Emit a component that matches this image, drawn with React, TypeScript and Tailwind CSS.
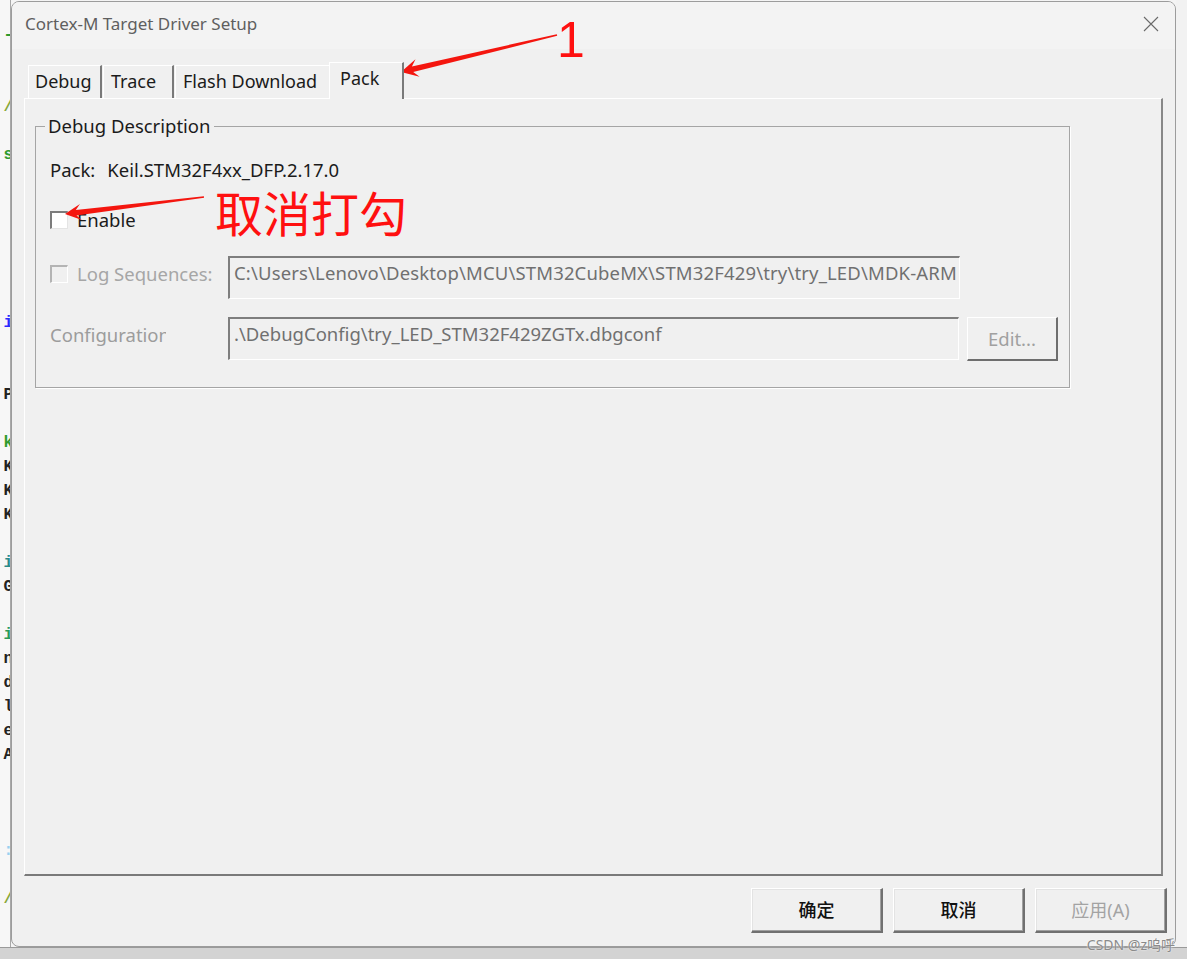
import React from 'react';

// code editor fragments peeking out at the left edge (line index -> glyph)
const codeLines: Record<number, { ch: string; color: string }> = {
  0: { ch: '-', color: 'text-[#2e9a2e]' },
  3: { ch: '/', color: 'text-[#8aa83a]' },
  5: { ch: 's', color: 'text-[#2e9a2e]' },
  12: { ch: 'i', color: 'text-[#2a2aff]' },
  15: { ch: 'P', color: 'text-[#222]' },
  17: { ch: 'k', color: 'text-[#2e9a2e]' },
  18: { ch: 'K', color: 'text-[#222]' },
  19: { ch: 'K', color: 'text-[#222]' },
  20: { ch: 'K', color: 'text-[#222]' },
  22: { ch: 'i', color: 'text-[#2a8a8a]' },
  23: { ch: 'G', color: 'text-[#222]' },
  25: { ch: 'i', color: 'text-[#2a9a5a]' },
  26: { ch: 'n', color: 'text-[#222]' },
  27: { ch: 'd', color: 'text-[#222]' },
  28: { ch: 'l', color: 'text-[#222]' },
  29: { ch: 'e', color: 'text-[#222]' },
  30: { ch: 'A', color: 'text-[#222]' },
  34: { ch: ':', color: 'text-[#9ad0f0]' },
  36: { ch: '/', color: 'text-[#8aa83a]' },
};

// tapered red annotation arrow: thin tail, wider neck, notched head
const arrow = (
  tx: number, ty: number, hx: number, hy: number,
  headLen: number, headHalf: number, tailW: number, neckW: number
) => {
  const dx = hx - tx;
  const dy = hy - ty;
  const len = Math.hypot(dx, dy);
  const ux = dx / len;
  const uy = dy / len;
  const nx = -uy;
  const ny = ux;
  const bx = hx - ux * headLen;
  const by = hy - uy * headLen;
  const kx = hx - ux * headLen * 0.7;
  const ky = hy - uy * headLen * 0.7;
  const pts = [
    [tx + nx * tailW, ty + ny * tailW],
    [kx + nx * neckW, ky + ny * neckW],
    [bx + nx * headHalf, by + ny * headHalf],
    [hx, hy],
    [bx - nx * headHalf, by - ny * headHalf],
    [kx - nx * neckW, ky - ny * neckW],
    [tx - nx * tailW, ty - ny * tailW],
  ];
  return pts.map((p) => p[0].toFixed(1) + ',' + p[1].toFixed(1)).join(' ');
};

const Check = ({ disabled }: { disabled?: boolean }) => (
  <span
    className={
      disabled
        ? 'block w-[18px] h-[18px] border-t-2 border-l-2 border-t-[#b4b4b4] border-l-[#b4b4b4] border-b border-r border-b-white border-r-white bg-[#f0f0f0]'
        : 'block w-[18px] h-[18px] border-t-2 border-l-2 border-t-[#7c7c7c] border-l-[#7c7c7c] border-b border-r border-b-[#e4e4e4] border-r-[#e4e4e4] bg-white'
    }
  />
);

const Tab = ({ label, w, active, className = '' }: { label: string; w: string; active?: boolean; className?: string }) => (
  <div
    className={
      (active
        ? 'h-[37px] mb-[-1px] relative z-10 bg-[#f0f0f0] pt-[3px] '
        : 'h-[33px] pt-[3px] ') +
      'border-t border-l border-white border-r-2 border-r-[#7a7a7a] px-[7px] text-[18px] leading-[24px] text-[#1b1b1b] whitespace-nowrap ' +
      w + ' ' + className
    }
  >
    {label}
  </div>
);

const Button = ({ label, disabled }: { label: string; disabled?: boolean }) => (
  <div
    className={
      'w-[132px] h-[45px] flex items-center justify-center bg-[#f0f0f0] border-t border-l border-white border-r-2 border-b-2 border-r-[#707070] border-b-[#707070] shadow-[inset_-1px_-1px_0_#a0a0a0,inset_1px_1px_0_#e3e3e3] text-[18px] ' +
      (disabled ? 'text-[#a3a3a3]' : 'text-[#111] font-medium')
    }
  >
    {label}
  </div>
);

export default function App() {
  return (
    <div className="relative w-[1187px] h-[959px] overflow-hidden flex flex-col bg-[#f4f4f4] font-['Noto_Sans','Noto_Sans_CJK_SC',sans-serif]">
      <div className="flex h-[947px]">
        {/* editor strip behind the dialog */}
        <div className="w-[11px] shrink-0 bg-[#f7f7f7] border-r border-[#a8a8a8] overflow-hidden pt-[23px] font-['Liberation_Mono',monospace] text-[16px] font-bold">
          {Array.from({ length: 38 }).map((_, i) => (
            <div key={i} className={'h-[24px] leading-[24px] flex justify-end whitespace-nowrap mr-[-3px] ' + (codeLines[i]?.color ?? '')}>
              {codeLines[i]?.ch ?? ''}
            </div>
          ))}
        </div>

        {/* dialog window */}
        <div className="w-[1165px] shrink-0 mt-[1px] flex flex-col rounded-[8px] border border-[#9c9c9c] bg-[#f0f0f0] overflow-hidden">
          <div className="h-[47px] shrink-0 flex items-center justify-between bg-[#f3f3f3] pl-[13px] pr-[16px] pb-[4px]">
            <span className="text-[17px] text-[#5f5f5f]">Cortex-M Target Driver Setup</span>
            <svg width="16" height="16" viewBox="0 0 16 16">
              <path d="M1 1 L15 15 M15 1 L1 15" stroke="#6a6a6a" strokeWidth="1.1" />
            </svg>
          </div>

          <div className="flex-1 flex flex-col px-[12px]">
            {/* tabs */}
            <div className="h-[49px] shrink-0 flex items-end pl-[4px]">
              <Tab label="Debug" w="w-[74px]" className="pl-[6px]" />
              <Tab label="Trace" w="w-[71px]" className="ml-[1px]" />
              <Tab label="Flash Download" w="w-[156px]" className="ml-[1px]" />
              <Tab label="Pack" w="w-[75px]" active className="ml-[-2px] pl-[10px]" />
            </div>

            {/* tab page */}
            <div className="flex-1 border-t border-l border-white border-r-2 border-b-2 border-r-[#888] border-b-[#7a7a7a] pt-[15px] pl-[10px]">
              <fieldset className="w-[1035px] border border-[#a5a5a5] shadow-[1px_1px_0_#fff] px-[9px] pb-[26px]">
                <legend className="px-[3px] text-[18.5px] leading-[24px] text-[#1b1b1b] bg-[#f0f0f0]">Debug Description</legend>
                <div className="pl-[5px] flex flex-col text-[18.5px] leading-[24px]">
                  <div className="mt-[20px] h-[24px] flex text-[#1b1b1b]">
                    <span>Pack:</span>
                    <span className="ml-[12px]">Keil.STM32F4xx_DFP.2.17.0</span>
                  </div>

                  <div className="mt-[26px] h-[24px] flex items-center">
                    <Check />
                    <span className="ml-[9px] text-[#1b1b1b]">Enable</span>
                  </div>

                  <div className="mt-[24px] h-[43px] flex items-start">
                    <div className="w-[178px] h-[24px] mt-[6px] flex items-center">
                      <Check disabled />
                      <span className="ml-[9px] text-[#a6a6a6] whitespace-nowrap">Log Sequences:</span>
                    </div>
                    <div className="w-[732px] h-[43px] overflow-hidden whitespace-nowrap border-t-2 border-l-2 border-t-[#7e7e7e] border-l-[#7e7e7e] border-b border-r border-b-white border-r-white pl-[4px] pt-[3px] text-[#707070] tracking-[0.15px]">
                      C:\Users\Lenovo\Desktop\MCU\STM32CubeMX\STM32F429\try\try_LED\MDK-ARM
                    </div>
                  </div>

                  <div className="mt-[18px] h-[44px] flex items-start">
                    <div className="w-[178px] mt-[6px] whitespace-nowrap text-[#9c9c9c]">
                      <div className="w-[116px] overflow-hidden">Configuration</div>
                    </div>
                    <div className="w-[731px] h-[43px] overflow-hidden whitespace-nowrap border-t-2 border-l-2 border-t-[#7e7e7e] border-l-[#7e7e7e] border-b border-r border-b-white border-r-white pl-[4px] pt-[3px] text-[#707070]">
                      .\DebugConfig\try_LED_STM32F429ZGTx.dbgconf
                    </div>
                    <div className="ml-[8px] w-[91px] h-[44px] flex items-center justify-center border-t border-l border-white border-r-2 border-b-2 border-r-[#6e6e6e] border-b-[#6e6e6e] text-[#a0a0a0]">
                      Edit...
                    </div>
                  </div>
                </div>
              </fieldset>
            </div>

            {/* dialog buttons */}
            <div className="h-[45px] shrink-0 mt-[12px] mb-[13px] mr-[-4px] flex justify-end gap-[10px]">
              <Button label="确定" />
              <Button label="取消" />
              <Button label="应用(A)" disabled />
            </div>
          </div>
        </div>

        <div className="flex-1 bg-[#f2f2f2]" />
      </div>
      <div className="flex-1 bg-[#d3d3d3] border-t border-[#9a9a9a]" />

      {/* annotations */}
      <svg className="absolute inset-0 pointer-events-none" width="1187" height="959">
        <polygon points={arrow(557, 35, 401, 72, 17, 9, 0.8, 2.8)} fill="#f4160f" />
        <polygon points={arrow(204, 197, 65, 214, 16, 8, 0.8, 2.8)} fill="#f4160f" />
      </svg>
      <div className="absolute left-[557px] top-[15px] text-[50px] leading-none text-[#ff1010] font-['Liberation_Sans',sans-serif]">1</div>
      <div className="absolute left-[215px] top-[187px] text-[48px] leading-none text-[#ff1010] font-['Noto_Sans_CJK_SC',sans-serif]">取消打勾</div>
      <div className="absolute right-[12px] bottom-[7px] text-[14px] leading-none text-[#8a8a8a] [text-shadow:0_0_2px_#fff] font-['Noto_Sans','Noto_Sans_CJK_SC',sans-serif]">CSDN @z呜呼</div>
    </div>
  );
}
